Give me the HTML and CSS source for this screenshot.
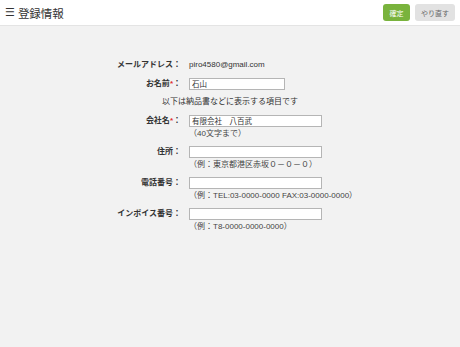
FILE: index.html
```html
<!DOCTYPE html>
<html lang="ja">
  <head>
    <meta charset="UTF-8" />
    <meta name="viewport" content="width=device-width, initial-scale=1.0" />
    <title>登録情報</title>
    <link rel="stylesheet" href="styles.css">
  </head>
  <body>
    <!-- ヘッダー -->
    <header class="header">
      <h1 class="title"><span class="menu-icon">☰</span>登録情報</h1>
      <div class="actions">
        <button type="button" class="btn btn-ok">確定</button>
        <button type="button" class="btn btn-reset">やり直す</button>
      </div>
    </header>

    <main class="main">
      <form class="form">
        <div class="row row-mail">
          <label class="label">メールアドレス：</label>
          <div class="field"><span class="value">piro4580@gmail.com</span></div>
        </div>

        <div class="row">
          <label class="label" for="name">お名前<span class="req">*</span>：</label>
          <div class="field"><input type="text" id="name" class="input input-short" value="石山" /></div>
        </div>

        <p class="note">以下は納品書などに表示する項目です</p>

        <div class="row">
          <label class="label" for="company">会社名<span class="req">*</span>：</label>
          <div class="field">
            <input type="text" id="company" class="input" value="有限会社　八百武" />
            <div class="hint">（40文字まで）</div>
          </div>
        </div>

        <div class="row">
          <label class="label" for="address">住所：</label>
          <div class="field">
            <input type="text" id="address" class="input" />
            <div class="hint">（例：東京都港区赤坂０－０－０）</div>
          </div>
        </div>

        <div class="row">
          <label class="label" for="tel">電話番号：</label>
          <div class="field">
            <input type="text" id="tel" class="input" />
            <div class="hint">（例：TEL:03-0000-0000 FAX:03-0000-0000）</div>
          </div>
        </div>

        <div class="row">
          <label class="label" for="invoice">インボイス番号：</label>
          <div class="field">
            <input type="text" id="invoice" class="input" />
            <div class="hint">（例：T8-0000-0000-0000）</div>
          </div>
        </div>
      </form>
    </main>
  </body>
</html>
```

FILE: styles.css
```css
/* 全体 */
body {
  margin: 0;
  padding: 0;
  min-height: 100vh;
  background-color: #f2f2f2;
  font-family: "Liberation Sans", "Noto Sans CJK JP", sans-serif;
  font-size: 8px;
  color: #333;
}

.header {
  height: 25px;
  background-color: #fff;
  border-bottom: 1px solid #e4e4e4;
  display: flex;
  align-items: center;
  justify-content: space-between;
  padding: 0 5px;
}

.title {
  margin: 0;
  font-size: 11.5px;
  font-weight: normal;
  color: #333;
  display: flex;
  align-items: center;
}

.menu-icon {
  font-size: 11px;
  margin-right: 3px;
  font-family: "DejaVu Sans", sans-serif;
}

.actions {
  display: flex;
  gap: 5px;
}

.btn {
  height: 17px;
  border: none;
  border-radius: 3px;
  font-family: inherit;
  font-size: 7px;
  padding: 0;
}

.btn-ok {
  width: 27px;
  background-color: #79b33d;
  color: #fff;
}

.btn-reset {
  width: 40px;
  background-color: #e2e2e2;
  color: #666;
}

.main {
  padding-top: 33px;
}

.form {
  width: 460px;
}

.row {
  display: grid;
  grid-template-columns: 181px 1fr;
  column-gap: 8px;
  align-items: start;
  margin-bottom: 6px;
}

.label {
  text-align: right;
  font-weight: bold;
  line-height: 12px;
  color: #333;
}

.req {
  color: #e03030;
}

.row-mail {
  margin-bottom: 7px;
}

.value {
  line-height: 12px;
  color: #333;
}

.input {
  display: block;
  box-sizing: border-box;
  width: 133px;
  height: 12px;
  margin: 0;
  padding: 0 2px 1px;
  border: 1px solid #b5b5b5;
  background-color: #fff;
  font-family: "Noto Sans CJK JP", sans-serif;
  font-size: 7.5px;
  color: #333;
}

.input-short {
  width: 96px;
}

.hint {
  line-height: 13px;
  color: #444;
}

.note {
  margin: 0 0 7px;
  text-align: center;
  line-height: 12px;
}
```
